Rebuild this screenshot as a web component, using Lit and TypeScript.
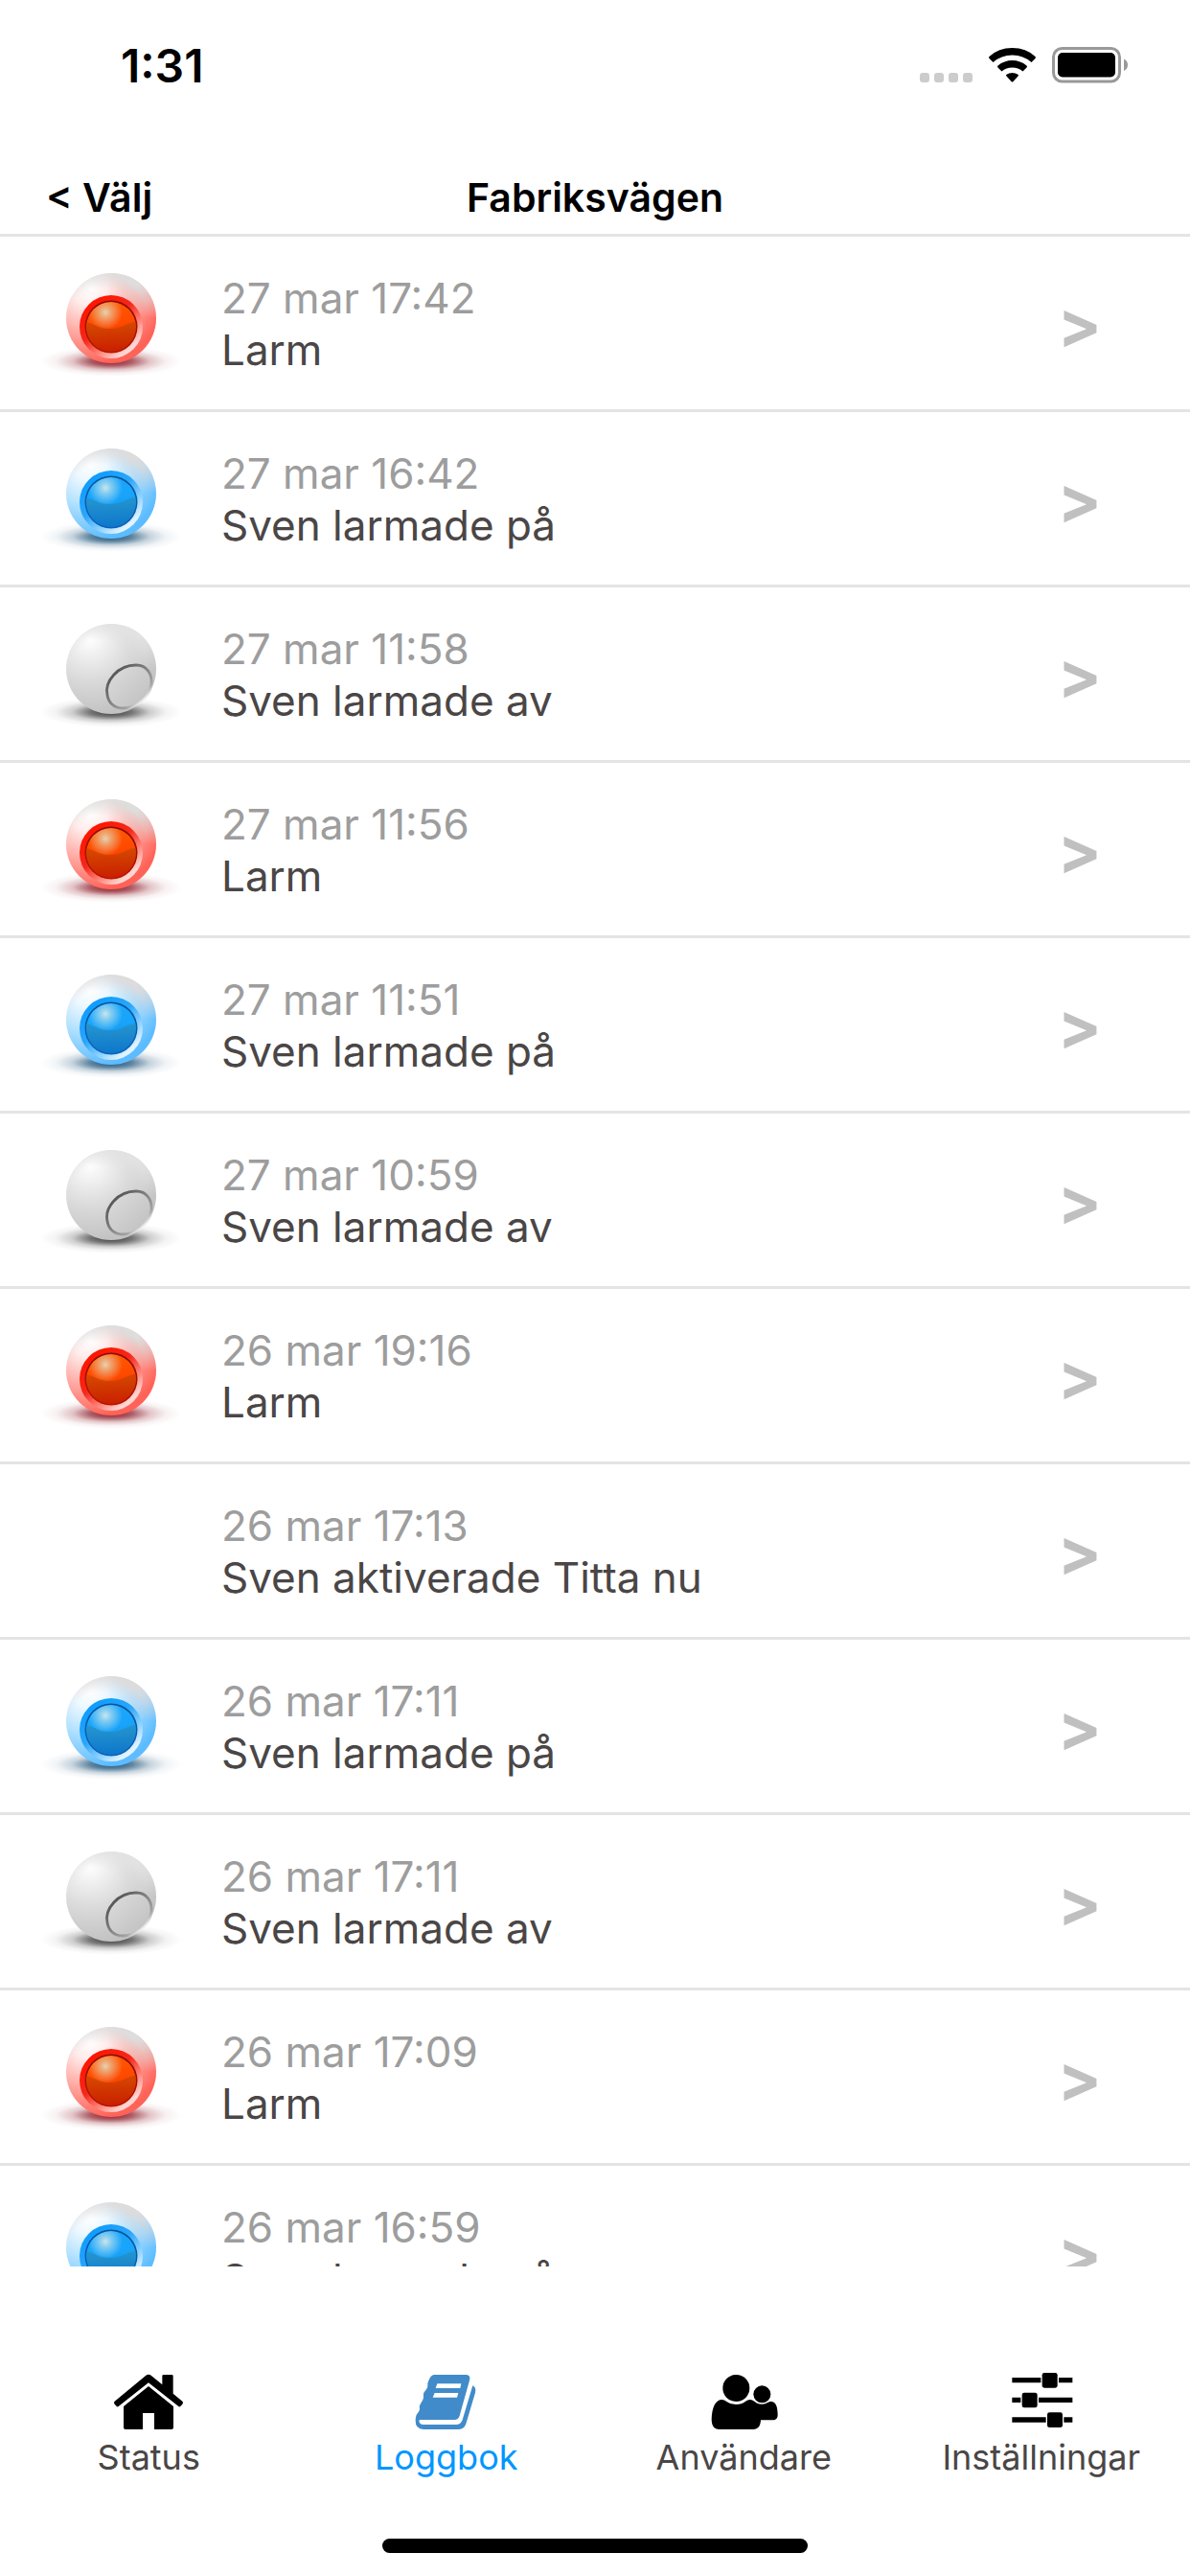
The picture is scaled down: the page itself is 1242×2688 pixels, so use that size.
import { LitElement, css, html, svg, nothing } from "lit";
import { customElement, property, state } from "lit/decorators.js";
import { classMap } from "lit/directives/class-map.js";

type OrbKind = "alarm" | "armed" | "disarmed";

interface LogEntry {
    time: string;
    text: string;
    kind?: OrbKind;
}

const entries: LogEntry[] = [
    { time: "27 mar 17:42", text: "Larm", kind: "alarm" },
    { time: "27 mar 16:42", text: "Sven larmade på", kind: "armed" },
    { time: "27 mar 11:58", text: "Sven larmade av", kind: "disarmed" },
    { time: "27 mar 11:56", text: "Larm", kind: "alarm" },
    { time: "27 mar 11:51", text: "Sven larmade på", kind: "armed" },
    { time: "27 mar 10:59", text: "Sven larmade av", kind: "disarmed" },
    { time: "26 mar 19:16", text: "Larm", kind: "alarm" },
    { time: "26 mar 17:13", text: "Sven aktiverade Titta nu" },
    { time: "26 mar 17:11", text: "Sven larmade på", kind: "armed" },
    { time: "26 mar 17:11", text: "Sven larmade av", kind: "disarmed" },
    { time: "26 mar 17:09", text: "Larm", kind: "alarm" },
    { time: "26 mar 16:59", text: "Sven larmade på", kind: "armed" },
];

const palettes = {
    alarm: {
        shadow: "#8c1a26",
        shell: ["#ffffff", "#ffeceb", "#ffb3ad", "#ff6257"],
        top: "#dcdede",
        socket: ["#ff1500", "#f5281a", "#ff8a80", "#ffd6d2"],
        rim: "#8f0a00",
        ball: ["#ff5a00", "#ff4a00", "#e02a00", "#b81400"],
        low: ["#c84a00", "#c01400"],
        shine: "#e6d2b0",
    },
    armed: {
        shadow: "#1c5278",
        shell: ["#ffffff", "#ecf8ff", "#b4e2ff", "#5cbcff"],
        top: "#dedbdb",
        socket: ["#0e9cff", "#2ba6fa", "#8fd2ff", "#e0f3ff"],
        rim: "#05569c",
        ball: ["#1ba6fb", "#18a4fa", "#0c8ce0", "#0a62bc"],
        low: ["#2a92c0", "#0a6ac4"],
        shine: "#c8e6ec",
    },
    disarmed: {
        shadow: "#3c3c3c",
        shell: ["#ffffff", "#efefef", "#dadada", "#c2c2c2"],
        top: "#e2e2e2",
    },
};

@customElement("status-orb")
class StatusOrb extends LitElement {
    @property() kind: OrbKind = "disarmed";

    static styles = css`
        :host {
            display: block;
        }
        svg {
            display: block;
            width: 100%;
        }
    `;

    renderLens() {
        if (this.kind === "disarmed") {
            return svg`
                <defs>
                    <linearGradient id="edge" x1="0" y1="0" x2="1" y2="1">
                        <stop offset="0.1" stop-color="#504c4c" />
                        <stop offset="0.4" stop-color="#777" />
                        <stop offset="0.72" stop-color="#a4a4a4" />
                        <stop offset="0.82" stop-color="#f2f2f2" />
                    </linearGradient>
                    <linearGradient id="disc" x1="0" y1="0" x2="1" y2="1">
                        <stop offset="0" stop-color="#dedede" />
                        <stop offset="1" stop-color="#bdbdbd" />
                    </linearGradient>
                </defs>
                <path
                    d="M71 97C68 83 82 66 101 66C112 66 118 75 117 86C115 101 100 111 87 111C78 111 72 105 71 97Z"
                    fill="url(#disc)" stroke="url(#edge)" stroke-width="2.8" />`;
        }
        const p = palettes[this.kind];
        return svg`
            <defs>
                <linearGradient id="socket" x1="0.2" y1="0.1" x2="0.85" y2="0.9">
                    <stop offset="0" stop-color=${p.socket[0]} />
                    <stop offset="0.4" stop-color=${p.socket[1]} />
                    <stop offset="0.7" stop-color=${p.socket[2]} />
                    <stop offset="0.92" stop-color=${p.socket[3]} />
                </linearGradient>
                <linearGradient id="rim" x1="0.6" y1="0" x2="0.4" y2="1">
                    <stop offset="0" stop-color=${p.rim} />
                    <stop offset="1" stop-color=${p.ball[3]} />
                </linearGradient>
                <linearGradient id="ball" x1="0.4" y1="0" x2="0.6" y2="1">
                    <stop offset="0" stop-color=${p.ball[0]} />
                    <stop offset="0.45" stop-color=${p.ball[1]} />
                    <stop offset="1" stop-color=${p.ball[2]} />
                </linearGradient>
                <linearGradient id="low" x1="0" y1="0" x2="0" y2="1">
                    <stop offset="0" stop-color=${p.low[0]} />
                    <stop offset="1" stop-color=${p.low[1]} />
                </linearGradient>
                <radialGradient id="shine">
                    <stop offset="0" stop-color=${p.shine} />
                    <stop offset="0.3" stop-color=${p.shine} stop-opacity="0.65" />
                    <stop offset="1" stop-color=${p.shine} stop-opacity="0" />
                </radialGradient>
                <clipPath id="round"><circle cx="75" cy="79" r="26" /></clipPath>
            </defs>
            <circle cx="75" cy="79" r="33" fill="url(#socket)" />
            <circle cx="75" cy="79" r="27.5" fill="url(#rim)" />
            <g clip-path="url(#round)">
                <circle cx="75" cy="79" r="26" fill="url(#ball)" />
                <path d="M46 73C60 77 65 81 75 81C85 81 90 75 104 73V110H46Z" fill="url(#low)" opacity="0.75" />
                <circle cx="69" cy="64" r="18" fill="url(#shine)" />
            </g>`;
    }

    render() {
        const p = palettes[this.kind];
        return html`
            <svg viewBox="0 0 150 150" aria-hidden="true">
                <defs>
                    <radialGradient id="shadow">
                        <stop offset="0" stop-color=${p.shadow} stop-opacity="1" />
                        <stop offset="0.3" stop-color=${p.shadow} stop-opacity="0.7" />
                        <stop offset="0.55" stop-color=${p.shadow} stop-opacity="0.25" />
                        <stop offset="0.78" stop-color=${p.shadow} stop-opacity="0.06" />
                        <stop offset="1" stop-color=${p.shadow} stop-opacity="0" />
                    </radialGradient>
                    <radialGradient id="shell" cx="0.26" cy="0.16" r="0.9">
                        <stop offset="0" stop-color=${p.shell[0]} />
                        <stop offset="0.22" stop-color=${p.shell[1]} />
                        <stop offset="0.52" stop-color=${p.shell[2]} />
                        <stop offset="0.95" stop-color=${p.shell[3]} />
                    </radialGradient>
                    <radialGradient id="cap" cx="0.38" cy="0.5" r="0.58">
                        <stop offset="0" stop-color=${p.top} stop-opacity="0" />
                        <stop offset="0.55" stop-color=${p.top} stop-opacity="0" />
                        <stop offset="0.9" stop-color=${p.top} stop-opacity="1" />
                    </radialGradient>
                    <linearGradient id="fade" x1="0" y1="0" x2="0" y2="1">
                        <stop offset="0" stop-color="#fff" />
                        <stop offset="0.12" stop-color="#fff" />
                        <stop offset="0.5" stop-color="#000" />
                    </linearGradient>
                    <mask id="upper">
                        <rect x="28" y="23" width="94" height="94" fill="url(#fade)" />
                    </mask>
                </defs>
                <ellipse cx="75" cy="115" rx="74" ry="16" fill="url(#shadow)" />
                <circle cx="75" cy="70" r="47" fill="url(#shell)" />
                <circle cx="75" cy="70" r="47" fill="url(#cap)" mask="url(#upper)" />
                ${this.renderLens()}
            </svg>
        `;
    }
}

const tabs = [
    {
        id: "status",
        label: "Status",
        icon: svg`
            <path d="M99 9Q108 1 117 9L151 37V10Q151 6 155 6H181Q185 6 185 10V65L214 89Q218 93 214 98L210 103Q206 108 202 105L108 31L14 105Q10 108 6 103L2 98Q-2 93 2 89Z" />
            <path d="M108 42L186 105V171Q186 177 180 177H126V126H90V177H36Q30 177 30 171V105Z" />`,
    },
    {
        id: "log",
        label: "Loggbok",
        icon: svg`
            <path fill-rule="evenodd" d="M68 6H170Q185 8 180 24L149 134Q145 147 133 147H25Q20 149 24 157Q27 162 34 162H138Q153 162 158 147L190 40Q202 46 198 62L169 160Q163 177 147 177H36Q10 175 11 150Q10 142 14 131Q24 120 24 112Q22 103 26 98Q36 84 36 76Q34 66 38 61Q50 47 49 40Q48 32 51 27Q58 8 68 6ZM79 34L74 48H151L154 34ZM71 63L65 77H141L145 63Z" />`,
    },
    {
        id: "users",
        label: "Användare",
        icon: svg`
            <ellipse cx="85" cy="48" rx="42" ry="42" />
            <circle cx="166" cy="67" r="27" />
            <path d="M8 145C9 108 20 84 41 84C52 84 60 99 85 99C110 99 116 84 128 84C142 84 144 98 166 98C182 98 184 90 194 90C210 90 215 108 215 132C215 142 209 148 200 148H162C161 168 153 177 139 177H32C16 177 8 167 8 145Z" />`,
    },
    {
        id: "settings",
        label: "Inställningar",
        icon: svg`
            <path d="M16 15H106V31H16ZM162 15H205V31H162ZM16 77H43V93H16ZM99 77H205V93H99ZM16 139H122V155H16ZM178 139H205V155H178Z" />
            <rect x="110" y="0" width="48" height="47" rx="7" />
            <rect x="47" y="62" width="48" height="47" rx="7" />
            <rect x="126" y="124" width="48" height="47" rx="7" />`,
    },
];

@customElement("app-root")
class AppRoot extends LitElement {
    @state() activeTab = "log";

    static styles = css`
        :host {
            display: flex;
            flex-direction: column;
            height: 100vh;
            overflow: hidden;
            background: #fff;
            color: #4a4646;
            font-family: Inter, "Liberation Sans", sans-serif;
        }
        .status-bar {
            display: flex;
            justify-content: space-between;
            align-items: center;
            height: 136px;
            padding: 0 64px 0 126px;
            flex: none;
            color: #000;
        }
        .clock {
            font-size: 48px;
            font-weight: 600;
        }
        .indicators {
            display: block;
            width: 218px;
            height: 38px;
        }
        .title-bar {
            display: grid;
            grid-template-columns: 1fr auto 1fr;
            align-items: end;
            height: 108px;
            padding: 0 48px;
            border-bottom: 3px solid #e4e4e4;
            flex: none;
            color: #000;
        }
        .title-bar h1,
        .back {
            margin: 0;
            padding: 0 0 12px;
            font-family: inherit;
            font-size: 41px;
            line-height: 52px;
            font-weight: 600;
        }
        .back {
            justify-self: start;
            border: 0;
            background: none;
            color: inherit;
        }
        .log {
            flex: 1;
            min-height: 0;
            margin: 0;
            padding: 0;
            list-style: none;
            overflow-y: auto;
            scrollbar-width: none;
        }
        .entry {
            display: flex;
            align-items: center;
            gap: 40px;
            height: 180px;
            padding: 0 92px 0 41px;
            border-bottom: 3px solid #e4e4e4;
            color: inherit;
            text-decoration: none;
        }
        .orb {
            width: 150px;
            flex: none;
        }
        .details,
        .arrow {
            padding-top: 2px;
        }
        .details {
            flex: 1;
            font-size: 44px;
            line-height: 54px;
        }
        .time {
            display: block;
            color: #9d9d9d;
        }
        .message {
            display: block;
        }
        .arrow {
            color: #c0c0c0;
            font-size: 68px;
            font-weight: 700;
        }
        .tabs {
            display: grid;
            grid-template-columns: repeat(4, 1fr);
            padding-top: 111px;
            flex: none;
        }
        .tab {
            display: flex;
            flex-direction: column;
            align-items: center;
            gap: 4px;
            padding: 0;
            border: 0;
            background: none;
            color: #4a4646;
            font-family: inherit;
            font-size: 36px;
            line-height: 48px;
        }
        .tab svg {
            width: 72px;
            height: 60px;
            fill: #000;
        }
        .tab.active {
            color: #0096ff;
        }
        .tab.active svg {
            fill: #428bca;
        }
        .home-bar {
            width: 444px;
            height: 15px;
            margin: 61px auto 24px;
            border-radius: 8px;
            background: #000;
            flex: none;
        }
    `;

    renderIndicators() {
        return html`
            <svg class="indicators" viewBox="0 0 218 38" aria-hidden="true">
                <g fill="#ccc">
                    <rect x="0" y="27" width="10" height="10" rx="3" />
                    <rect x="15" y="27" width="10" height="10" rx="3" />
                    <rect x="30" y="27" width="10" height="10" rx="3" />
                    <rect x="45" y="27" width="10" height="10" rx="3" />
                </g>
                <path d="M72.5 12Q71.5 11 72.5 10Q82 1 96.5 1Q111 1 120.5 10Q121.5 11 120.5 12L116.5 16Q108 8.5 96.5 8.5Q85 8.5 76.5 16Z" />
                <path d="M81.5 21.5Q80.5 20.5 81.5 19.5Q88 14 96.5 14Q105 14 111.5 19.5Q112.5 20.5 111.5 21.5L107.5 25.5Q103 21.5 96.5 21.5Q90 21.5 85.5 25.5Z" />
                <path d="M90.5 30.5Q89.5 29.5 90.5 28.7Q93 27 96.5 27Q100 27 102.5 28.7Q103.5 29.5 102.5 30.5L97.5 36Q96.5 37 95.5 36Z" />
                <rect x="139.5" y="1.5" width="69" height="34.5" rx="9" fill="none" stroke="#999" stroke-width="3" />
                <rect x="144" y="6" width="60" height="25.5" rx="5" />
                <path d="M213 12.5Q217 14.5 217 18.8Q217 23 213 25Z" fill="#999" />
            </svg>
        `;
    }

    renderEntry(entry: LogEntry) {
        return html`
            <li>
                <a class="entry" href="#">
                    <div class="orb">
                        ${entry.kind ? html`<status-orb .kind=${entry.kind}></status-orb>` : nothing}
                    </div>
                    <div class="details">
                        <span class="time">${entry.time}</span>
                        <span class="message">${entry.text}</span>
                    </div>
                    <span class="arrow">&gt;</span>
                </a>
            </li>
        `;
    }

    render() {
        return html`
            <div class="status-bar">
                <span class="clock">1:31</span>
                ${this.renderIndicators()}
            </div>
            <header class="title-bar">
                <button class="back">&lt; Välj</button>
                <h1>Fabriksvägen</h1>
            </header>
            <ul class="log">
                ${entries.map((entry) => this.renderEntry(entry))}
            </ul>
            <nav class="tabs">
                ${tabs.map(
                    (tab) => html`
                        <button
                            class=${classMap({ tab: true, active: tab.id === this.activeTab })}
                            @click=${() => (this.activeTab = tab.id)}
                        >
                            <svg viewBox="0 0 216 180" aria-hidden="true">${tab.icon}</svg>
                            ${tab.label}
                        </button>
                    `
                )}
            </nav>
            <div class="home-bar"></div>
        `;
    }
}
